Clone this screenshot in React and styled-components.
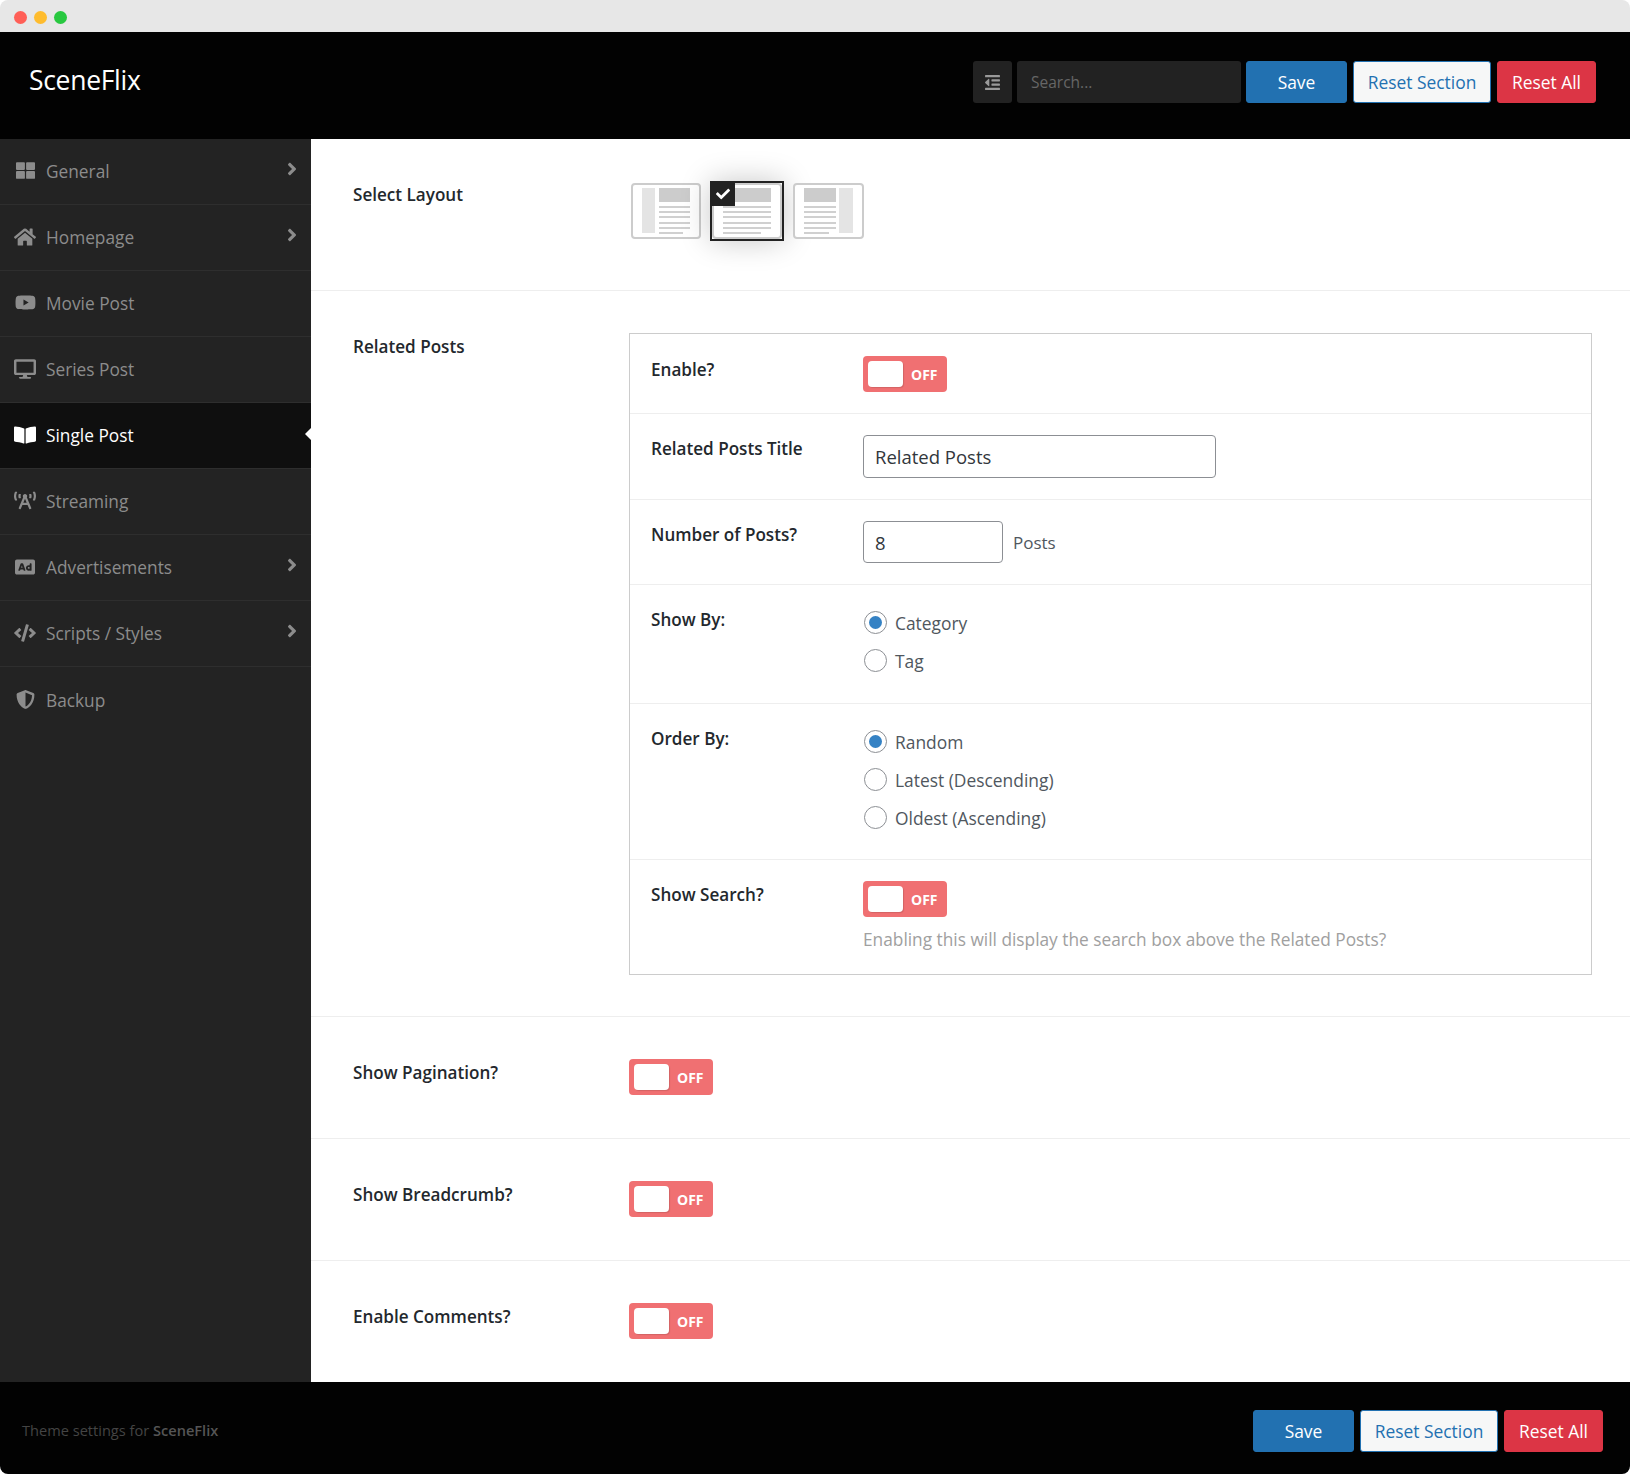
import React from "react";
import styled, { createGlobalStyle } from "styled-components";
import {
  FaThLarge,
  FaHome,
  FaYoutube,
  FaDesktop,
  FaBookOpen,
  FaBroadcastTower,
  FaAd,
  FaCode,
  FaShieldAlt,
  FaAngleRight,
  FaOutdent,
  FaCheck,
} from "react-icons/fa";

const GlobalStyle = createGlobalStyle`
  * { box-sizing: border-box; }
  body {
    margin: 0;
    background: #fff;
    font-family: "Open Sans", "Noto Sans", "Liberation Sans", sans-serif;
  }
`;

const Window = styled.div`
  width: 1630px;
  height: 1474px;
  display: flex;
  flex-direction: column;
  border-radius: 8px;
  overflow: hidden;
`;
const TitleBar = styled.div`
  height: 32px;
  flex: none;
  background: #e7e7e7;
  display: flex;
  align-items: center;
  gap: 7px;
  padding: 2px 0 0 14px;
`;
const Dot = styled.span`
  width: 13px;
  height: 13px;
  border-radius: 50%;
  background: ${(p) => p.color};
`;
const Header = styled.header`
  height: 107px;
  flex: none;
  background: #020202;
  display: flex;
  align-items: center;
  padding: 0 34px 7px 29px;
`;
const Brand = styled.div`
  color: #fff;
  font-size: 26.5px;
  letter-spacing: -0.3px;
  margin: -5px auto 0 0;
`;
const HeaderTools = styled.div`
  display: flex;
  align-items: center;
  gap: 5px;
`;
const IconButton = styled.button`
  width: 39px;
  height: 42px;
  background: #222;
  border: 0;
  border-radius: 3px;
  color: #999;
  display: flex;
  align-items: center;
  justify-content: center;
  font-size: 17px;
  padding: 0;
`;
const SearchBox = styled.input`
  width: 224px;
  height: 42px;
  background: #222;
  border: 0;
  border-radius: 3px;
  color: #ccc;
  font: inherit;
  font-size: 15.5px;
  padding: 0 14px;
  &::placeholder { color: #666; }
`;
const Btn = styled.button`
  height: 42px;
  width: ${(p) => p.w}px;
  margin-left: ${(p) => p.gap || 0}px;
  border-radius: 3px;
  font-family: inherit;
  font-size: 17.4px;
  padding: 0 0 1px;
  cursor: pointer;
  background: ${(p) => (p.kind === "save" ? "#2271b1" : p.kind === "danger" ? "#dc3545" : "#f6f7f7")};
  color: ${(p) => (p.kind === "reset" ? "#2271b1" : "#fff")};
  border: 1px solid ${(p) => (p.kind === "danger" ? "#dc3545" : "#2271b1")};
`;
const Main = styled.div`
  flex: 1;
  display: flex;
  min-height: 0;
`;
const Sidebar = styled.nav`
  width: 311px;
  flex: none;
  background: #232323;
`;
const MenuItem = styled.a`
  position: relative;
  display: flex;
  align-items: center;
  height: 66px;
  padding: 0 11px 0 15px;
  font-size: 17.3px;
  color: ${(p) => (p.active ? "#fff" : "#8c8c8c")};
  background: ${(p) => (p.active ? "#0f0f0f" : "transparent")};
  border-bottom: 1px solid #2e2e2e;
  &:last-child { border-bottom: 0; }
  ${(p) =>
    p.active &&
    `&::after {
      content: "";
      position: absolute;
      right: 0;
      top: 25px;
      border: 6px solid transparent;
      border-right-color: #fff;
      border-left-width: 0;
    }`}
`;
const MenuIcon = styled.span`
  width: 22px;
  margin: -2px 10px 0 -1px;
  display: flex;
  justify-content: center;
  font-size: ${(p) => p.size || 20}px;
`;
const MenuLabel = styled.span`
  flex: 1;
`;
const Chevron = styled(FaAngleRight)`
  font-size: 20px;
  margin: -5px -2px 0 0;
`;
const Content = styled.main`
  flex: 1;
  background: #fff;
  min-width: 0;
`;
const Section = styled.section`
  height: ${(p) => p.h}px;
  display: grid;
  grid-template-columns: 276px 1fr;
  align-items: start;
  padding: 42px 38px 0 42px;
  border-bottom: 1px solid #eee;
  &:last-child { border-bottom: 0; }
`;
const FieldLabel = styled.div`
  font-size: 17.1px;
  font-weight: 600;
  color: #23282d;
  line-height: 24px;
  padding-top: 2px;
`;
const LayoutPicker = styled.div`
  display: flex;
  align-items: center;
  gap: 9px;
  margin: 0 0 0 2px;
  height: 60px;
`;
const LayoutOption = styled.div`
  position: relative;
  line-height: 0;
  ${(p) =>
    p.selected &&
    `border: 2px solid #222;
     box-shadow: 0 0 30px rgba(0,0,0,.22);
     background: #fff;`}
`;
const CheckBadge = styled.span`
  position: absolute;
  top: -1px;
  left: -1px;
  width: 24px;
  height: 24px;
  background: #222;
  color: #fff;
  display: flex;
  align-items: center;
  justify-content: center;
  font-size: 14px;
`;
const Box = styled.div`
  border: 1px solid #ccc;
`;
const BoxRow = styled.div`
  height: ${(p) => p.h}px;
  display: grid;
  grid-template-columns: 212px 1fr;
  align-items: start;
  padding: ${(p) => p.top || 21}px 20px 0 21px;
  border-bottom: 1px solid #eee;
  &:last-child { border-bottom: 0; }
`;
const Toggle = styled.div`
  width: 84px;
  height: 36px;
  background: #f07072;
  border-radius: 4px;
  display: flex;
  align-items: center;
  padding-left: 5px;
  gap: 8px;
  color: #fff;
  font-size: 14px;
  font-weight: 700;
`;
const Knob = styled.span`
  width: 35px;
  height: 26px;
  background: #fff;
  border-radius: 4px;
  box-shadow: 1px 1px 1px rgba(0, 0, 0, 0.12);
`;
const TextInput = styled.input`
  width: ${(p) => p.w}px;
  height: ${(p) => p.h || 43}px;
  border: 1px solid #8c8f94;
  border-radius: 4px;
  background: #fff;
  color: #32373c;
  font: inherit;
  font-size: 18.5px;
  padding: 0 11px;
`;
const InlineField = styled.div`
  display: flex;
  align-items: center;
  gap: 10px;
  font-size: 17px;
  color: #50575e;
`;
const RadioList = styled.div`
  display: flex;
  flex-direction: column;
  gap: 15px;
  padding-top: 5px;
`;
const RadioOption = styled.label`
  display: flex;
  align-items: center;
  gap: 8px;
  height: 23px;
  font-size: 17.4px;
  color: #50575e;
`;
const Radio = styled.input.attrs({ type: "radio" })`
  appearance: none;
  width: 23px;
  height: 23px;
  margin: 0 0 0 1px;
  border: 1px solid #8c8f94;
  border-radius: 50%;
  background: #fff;
  display: flex;
  align-items: center;
  justify-content: center;
  &:checked::before {
    content: "";
    width: 13px;
    height: 13px;
    border-radius: 50%;
    background: #3582c4;
  }
`;
const Hint = styled.p`
  margin: 11px 0 0;
  font-size: 17.3px;
  color: #a0a0a0;
  line-height: 24px;
`;
const Footer = styled.footer`
  height: 92px;
  flex: none;
  background: #020202;
  display: flex;
  align-items: center;
  justify-content: space-between;
  padding: 6px 27px 0 22px;
`;
const FooterNote = styled.div`
  font-size: 14.6px;
  color: #444;
  margin-top: -2px;
  strong { font-weight: 600; color: #555; }
`;

// small wireframe thumbnails for the layout picker
function LayoutThumb({ width, sidebar, x1, x2, shortEnd }) {
  const lines = [23, 28, 33, 39, 44];
  return (
    <svg width={width} height="56" viewBox={`0 0 ${width} 56`}>
      <rect x="1" y="1" width={width - 2} height="54" rx="3" fill="#fff" stroke="#ccc" strokeWidth="2" />
      {sidebar && <rect x={sidebar[0]} y="5" width={sidebar[1] - sidebar[0]} height="45" fill="#e4e4e4" />}
      <rect x={x1} y="5" width={x2 - x1} height="14" fill="#ccc" />
      {lines.map((y) => (
        <rect key={y} x={x1} y={y} width={x2 - x1} height="2" fill="#d0d0d0" />
      ))}
      <rect x={x1} y="49" width={shortEnd - x1} height="2" fill="#d0d0d0" />
    </svg>
  );
}

const menu = [
  { label: "General", icon: <FaThLarge />, size: 19, arrow: true },
  { label: "Homepage", icon: <FaHome />, size: 22, arrow: true },
  { label: "Movie Post", icon: <FaYoutube />, size: 21 },
  { label: "Series Post", icon: <FaDesktop />, size: 24 },
  { label: "Single Post", icon: <FaBookOpen />, size: 22, active: true },
  { label: "Streaming", icon: <FaBroadcastTower />, size: 23 },
  { label: "Advertisements", icon: <FaAd />, size: 20, arrow: true },
  { label: "Scripts / Styles", icon: <FaCode />, size: 22, arrow: true },
  { label: "Backup", icon: <FaShieldAlt />, size: 19 },
];

function OffToggle() {
  return (
    <Toggle>
      <Knob />
      OFF
    </Toggle>
  );
}

function ActionButtons() {
  return (
    <HeaderTools>
      <Btn kind="save" w={101}>Save</Btn>
      <Btn kind="reset" w={138} gap={1}>Reset Section</Btn>
      <Btn kind="danger" w={99} gap={1}>Reset All</Btn>
    </HeaderTools>
  );
}

export default function App() {
  return (
    <Window>
      <GlobalStyle />
      <TitleBar>
        <Dot color="#ff5f57" />
        <Dot color="#febc2e" />
        <Dot color="#28c840" />
      </TitleBar>
      <Header>
        <Brand>SceneFlix</Brand>
        <HeaderTools>
          <IconButton><FaOutdent /></IconButton>
          <SearchBox placeholder="Search..." />
          <ActionButtons />
        </HeaderTools>
      </Header>
      <Main>
        <Sidebar>
          {menu.map((m) => (
            <MenuItem key={m.label} active={m.active}>
              <MenuIcon size={m.size}>{m.icon}</MenuIcon>
              <MenuLabel>{m.label}</MenuLabel>
              {m.arrow && <Chevron />}
            </MenuItem>
          ))}
        </Sidebar>
        <Content>
          <Section h={152}>
            <FieldLabel>Select Layout</FieldLabel>
            <LayoutPicker>
              <LayoutOption>
                <LayoutThumb width={70} sidebar={[11, 24]} x1={28} x2={59} shortEnd={52} />
              </LayoutOption>
              <LayoutOption selected>
                <LayoutThumb width={70} x1={11} x2={59} shortEnd={49} />
                <CheckBadge><FaCheck /></CheckBadge>
              </LayoutOption>
              <LayoutOption>
                <LayoutThumb width={71} sidebar={[46, 60]} x1={11} x2={43} shortEnd={36} />
              </LayoutOption>
            </LayoutPicker>
          </Section>
          <Section h={726}>
            <FieldLabel>Related Posts</FieldLabel>
            <Box>
              <BoxRow h={80} top={22}>
                <FieldLabel>Enable?</FieldLabel>
                <OffToggle />
              </BoxRow>
              <BoxRow h={86}>
                <FieldLabel>Related Posts Title</FieldLabel>
                <TextInput w={353} defaultValue="Related Posts" />
              </BoxRow>
              <BoxRow h={85}>
                <FieldLabel>Number of Posts?</FieldLabel>
                <InlineField>
                  <TextInput w={140} h={42} defaultValue="8" />
                  Posts
                </InlineField>
              </BoxRow>
              <BoxRow h={119}>
                <FieldLabel>Show By:</FieldLabel>
                <RadioList>
                  <RadioOption><Radio name="show" defaultChecked />Category</RadioOption>
                  <RadioOption><Radio name="show" />Tag</RadioOption>
                </RadioList>
              </BoxRow>
              <BoxRow h={156}>
                <FieldLabel>Order By:</FieldLabel>
                <RadioList>
                  <RadioOption><Radio name="order" defaultChecked />Random</RadioOption>
                  <RadioOption><Radio name="order" />Latest (Descending)</RadioOption>
                  <RadioOption><Radio name="order" />Oldest (Ascending)</RadioOption>
                </RadioList>
              </BoxRow>
              <BoxRow h={114}>
                <FieldLabel>Show Search?</FieldLabel>
                <div>
                  <OffToggle />
                  <Hint>Enabling this will display the search box above the Related Posts?</Hint>
                </div>
              </BoxRow>
            </Box>
          </Section>
          <Section h={122}>
            <FieldLabel>Show Pagination?</FieldLabel>
            <OffToggle />
          </Section>
          <Section h={122}>
            <FieldLabel>Show Breadcrumb?</FieldLabel>
            <OffToggle />
          </Section>
          <Section h={121}>
            <FieldLabel>Enable Comments?</FieldLabel>
            <OffToggle />
          </Section>
        </Content>
      </Main>
      <Footer>
        <FooterNote>Theme settings for <strong>SceneFlix</strong></FooterNote>
        <ActionButtons />
      </Footer>
    </Window>
  );
}
